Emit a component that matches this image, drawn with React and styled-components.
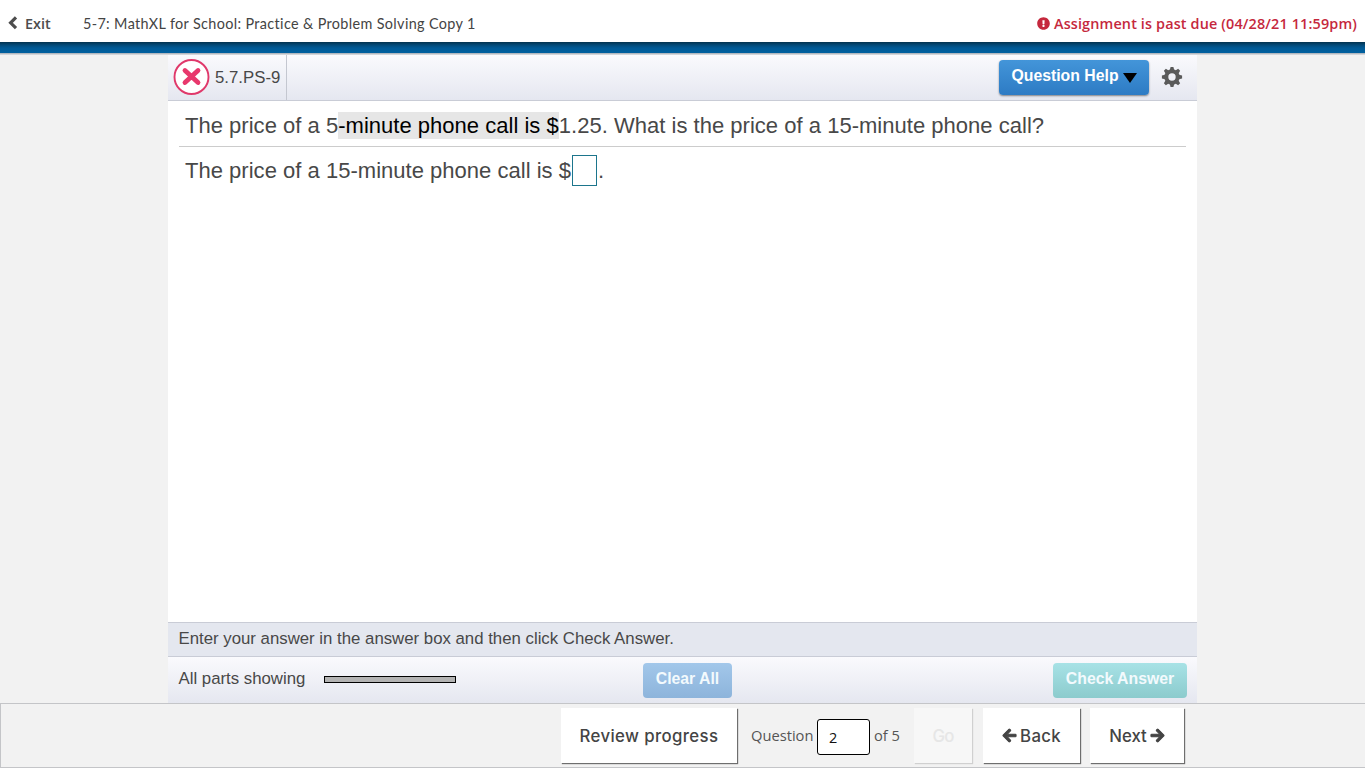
import React, { useState } from 'react';
import styled, { createGlobalStyle } from 'styled-components';
import { FaExclamationCircle, FaArrowLeft, FaArrowRight } from 'react-icons/fa';

const GlobalStyle = createGlobalStyle`
  * {
    box-sizing: border-box;
  }

  body {
    margin: 0;
    overflow: hidden;
    background: #f2f2f2;
    font-family: "Liberation Sans", Arial, sans-serif;
    color: #484848;
  }

  button, input {
    font-family: inherit;
  }
`;

const Page = styled.div`
  display: flex;
  flex-direction: column;
  height: 768px;
`;

const Header = styled.header`
  display: flex;
  align-items: center;
  height: 42px;
  padding: 4px 8px 0 8px;
  background: #ffffff;
  white-space: nowrap;
`;

const ExitLink = styled.a`
  display: flex;
  align-items: center;
  gap: 7px;
  width: 75px;
  font: 600 14.4px "Open Sans", sans-serif;
  color: #4d4d4d;
  cursor: pointer;
`;

const AssignmentTitle = styled.h1`
  flex: 1;
  margin: 0;
  font: 400 14.4px "Lato", sans-serif;
  letter-spacing: 0.36px;
  color: #444444;
`;

const PastDue = styled.div`
  display: flex;
  align-items: center;
  gap: 4px;
  font: 600 14.4px "Open Sans", sans-serif;
  letter-spacing: 0.15px;
  color: #c5283d;
`;

const BlueBar = styled.div`
  height: 13px;
  background: linear-gradient(#02324f 0, #034a78 3px, #005a96 6px, #00609f 11px, #a3a9b2 11px, #e3e4e7 13px);
`;

const Player = styled.main`
  display: flex;
  flex-direction: column;
  width: 1029px;
  height: 648px;
  margin-left: 168px;
  background: #ffffff;
`;

const Toolbar = styled.div`
  display: flex;
  align-items: center;
  height: 46px;
  padding-right: 14px;
  background: linear-gradient(#fafafd, #e5e7f0);
  border-bottom: 1px solid #c9ccd6;
`;

const QuestionTag = styled.div`
  display: flex;
  align-items: center;
  gap: 5px;
  width: 119px;
  height: 45px;
  padding-left: 5px;
  border-right: 1px solid #c4c7d0;
  font-size: 16.8px;
  white-space: nowrap;
`;

const ToolbarActions = styled.div`
  display: flex;
  align-items: center;
  gap: 12px;
  margin-left: auto;
`;

const buttonColors = {
  help: 'linear-gradient(#4395d9, #2d7bc4)',
  clear: 'linear-gradient(#a2c7ea, #8db4db)',
  check: 'linear-gradient(#a7e2e6, #8ccbcd)',
};

const ActionButton = styled.button`
  display: flex;
  align-items: center;
  justify-content: center;
  gap: 4px;
  width: ${(props) => props.$width}px;
  height: 35px;
  padding: 0 0 3px;
  border: none;
  border-radius: 4px;
  background: ${(props) => buttonColors[props.$kind]};
  box-shadow: ${(props) => (props.$kind === 'help' ? '0 1px 2px rgba(0, 0, 0, 0.45)' : 'none')};
  color: ${(props) => (props.$kind === 'help' ? '#ffffff' : '#f3fafd')};
  font-size: 15.8px;
  font-weight: bold;
  white-space: nowrap;
  cursor: pointer;
`;

const Caret = styled.span`
  margin-top: 3px;
  border: 7.5px solid transparent;
  border-top: 10px solid #000000;
  border-bottom: none;
`;

const Question = styled.section`
  flex: 1;
  padding: 0 11px;
  font-size: 22px;
  letter-spacing: 0.02px;
  white-space: nowrap;
`;

const Prompt = styled.p`
  height: 46px;
  margin: 0;
  padding: 11px 0 0 6px;
  border-bottom: 1px solid #cccccc;
  line-height: 27px;
`;

const Highlight = styled.span`
  display: inline-block;
  height: 27px;
  background: #e6e6e6;
  color: #000000;
`;

const AnswerLine = styled.div`
  display: flex;
  align-items: center;
  height: 47px;
  padding-left: 6px;
`;

const AnswerInput = styled.input`
  width: 25px;
  height: 31px;
  margin: 0 1px;
  padding: 0;
  border: 1px solid #1c758c;
  background: #ffffff;
  font-size: 20px;
  text-align: center;
`;

const Instruction = styled.div`
  height: 35px;
  padding: 0 10px 0 10.5px;
  border-top: 1px solid #c9ccd6;
  border-bottom: 1px solid #c9ccd6;
  background: #e4e7ef;
  font-size: 16.8px;
  line-height: 31px;
`;

const Actions = styled.div`
  display: grid;
  grid-template-columns: 145.5px 319px 1fr auto;
  align-items: center;
  height: 46px;
  padding: 0 10px 0 10.5px;
  background: linear-gradient(#fafafd, #e5e7f0);
  font-size: 16.8px;
`;

const PartsLabel = styled.span`
  padding-bottom: 3px;
  white-space: nowrap;
`;

const PartsProgress = styled.div`
  width: 132px;
  height: 7px;
  margin-bottom: 1px;
  border: 1px solid #000000;
  background: #b3b3b3;
`;

const NavBar = styled.nav`
  display: flex;
  align-items: center;
  height: 65px;
  padding-left: 560px;
  border: 1px solid #c4c5c8;
  border-right: none;
  background: #f2f2f2;
`;

const NavButton = styled.button`
  display: flex;
  align-items: center;
  justify-content: center;
  gap: 3px;
  width: ${(props) => props.$width}px;
  height: 55px;
  margin-right: ${(props) => props.$gap || 0}px;
  padding: 0;
  border: none;
  background: ${(props) => (props.disabled ? '#f7f7f7' : '#ffffff')};
  box-shadow: 1px 1px 1px ${(props) => (props.disabled ? '#d0d0d0' : '#6e6e6e')};
  color: ${(props) => (props.disabled ? '#e6e6e6' : '#444444')};
  font: 500 16.8px "Inter", sans-serif;
  letter-spacing: ${(props) => props.$spacing || 0}px;
  white-space: nowrap;
  cursor: pointer;

  svg {
    stroke: currentColor;
    stroke-width: 36px;
  }
`;

const PageLabel = styled.span`
  width: ${(props) => props.$width}px;
  padding-bottom: 2px;
  font: 400 14.7px "Open Sans", sans-serif;
  color: #555555;
  white-space: nowrap;
`;

const PageInput = styled.input`
  width: 53px;
  height: 36px;
  margin: 2px 4px 0 0;
  padding: 1px 11px 0;
  border: 1px solid #000000;
  border-radius: 3px;
  background: #ffffff;
  color: #111111;
  font: 400 14.5px "Open Sans", sans-serif;
`;

const ChevronIcon = () => (
  <svg width="10" height="14" viewBox="0 0 10 14">
    <path d="M8 1.4 L2.6 6.8 L8 12.2" fill="none" stroke="currentColor" strokeWidth="3.2" />
  </svg>
);

const IncorrectIcon = () => (
  <svg width="37" height="37" viewBox="0 0 37 37">
    <circle cx="18.5" cy="18" r="17" fill="#ffffff" stroke="#e0396b" strokeWidth="1.9" />
    <path d="M12 11.5 L25 23.5 M25 11.5 L12 23.5" stroke="#e8386d" strokeWidth="4.8" strokeLinecap="round" />
  </svg>
);

const teeth = [0, 45, 90, 135, 180, 225, 270, 315];

const GearIcon = () => (
  <svg width="22" height="24" viewBox="-11 -11 22 24">
    <circle r="5.7" fill="none" stroke="#5a5a5a" strokeWidth="4" />
    {teeth.map((angle) => (
      <path key={angle} d="M-2.2 -7 L-1.4 -10.1 H1.4 L2.2 -7 Z" fill="#5a5a5a" transform={`rotate(${angle})`} />
    ))}
  </svg>
);

function App() {
  const [answer, setAnswer] = useState('');
  const [page, setPage] = useState('2');

  return (
    <Page>
      <GlobalStyle />
      <Header>
        <ExitLink>
          <ChevronIcon />
          Exit
        </ExitLink>
        <AssignmentTitle>5-7: MathXL for School: Practice &amp; Problem Solving Copy 1</AssignmentTitle>
        <PastDue>
          <FaExclamationCircle size={13} />
          Assignment is past due (04/28/21 11:59pm)
        </PastDue>
      </Header>
      <BlueBar />

      <Player>
        <Toolbar>
          <QuestionTag>
            <IncorrectIcon />
            5.7.PS-9
          </QuestionTag>
          <ToolbarActions>
            <ActionButton $kind="help" $width={150}>
              Question Help
              <Caret />
            </ActionButton>
            <GearIcon />
          </ToolbarActions>
        </Toolbar>

        <Question>
          <Prompt>
            The price of a 5<Highlight>-minute phone call is $</Highlight>1.25. What is the price of a 15-minute phone call?
          </Prompt>
          <AnswerLine>
            <span>The price of a 15-minute phone call is $</span>
            <AnswerInput value={answer} onChange={(e) => setAnswer(e.target.value)} />
            <span>.</span>
          </AnswerLine>
        </Question>

        <Instruction>Enter your answer in the answer box and then click Check Answer.</Instruction>
        <Actions>
          <PartsLabel>All parts showing</PartsLabel>
          <PartsProgress />
          <ActionButton $kind="clear" $width={89}>Clear All</ActionButton>
          <ActionButton $kind="check" $width={134}>Check Answer</ActionButton>
        </Actions>
      </Player>

      <NavBar>
        <NavButton $width={176} $gap={14} $spacing={0.38}>Review progress</NavButton>
        <PageLabel $width={66}>Question</PageLabel>
        <PageInput value={page} onChange={(e) => setPage(e.target.value)} />
        <PageLabel $width={40}>of 5</PageLabel>
        <NavButton $width={58} $gap={11} $spacing={-0.8} disabled>Go</NavButton>
        <NavButton $width={97} $gap={10} $spacing={0.3}>
          <FaArrowLeft size={15} />
          Back
        </NavButton>
        <NavButton $width={94}>
          Next
          <FaArrowRight size={15} />
        </NavButton>
      </NavBar>
    </Page>
  );
}

export default App;
